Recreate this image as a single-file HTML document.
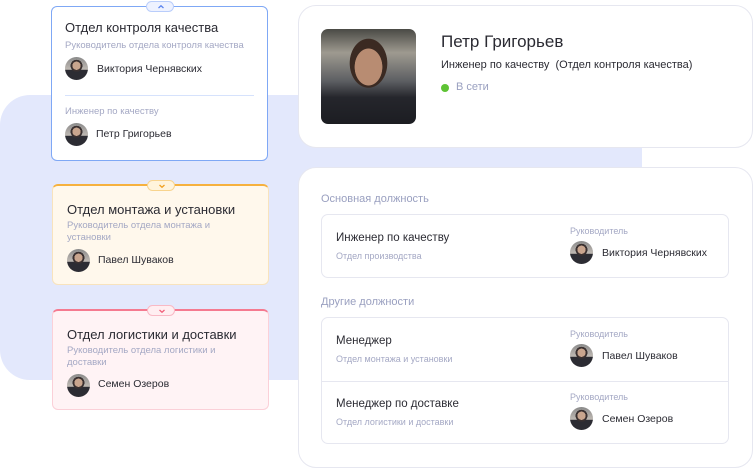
<!DOCTYPE html>
<html><head><meta charset="utf-8"><style>
*{box-sizing:border-box;margin:0;padding:0}
body{width:753px;height:468px;background:#fff;font-family:"Liberation Sans",sans-serif;position:relative;overflow:hidden;color:#2b2b33}
.abs{position:absolute}
.bg{left:0;top:95px;width:642px;height:285px;background:#e3e8fc;border-radius:30px 0 0 30px}
.card{position:absolute;border-radius:6px}
.t{font-size:13px;color:#2b2b33;position:absolute;white-space:nowrap}
.s{font-size:9.5px;color:#a4a8c4;position:absolute;line-height:12px}
.n{font-size:10.5px;color:#2b2b33;position:absolute;white-space:nowrap}
.av{position:absolute;width:23px;height:23px;border-radius:50%;background:radial-gradient(circle at 50% 38%,#c9a58e 0 22%,#3a3030 23% 32%,transparent 33%),linear-gradient(180deg,#8a8a8a 0%,#c0bab4 55%,#2c2c33 56%,#2c2c33 100%)}
.tab{position:absolute;width:28px;height:11px;border-radius:6px;left:94px;top:-6px}
.tab svg{position:absolute;left:10px;top:2px}
.big{position:absolute;background:#fff;border:1px solid #e6e7f0;border-radius:18px}
.box{position:absolute;left:22px;width:408px;border:1px solid #e6e7f0;border-radius:7px;background:#fff}
</style></head><body>
<div class="abs bg"></div>

<div class="card" style="left:51px;top:6px;width:217px;height:155px;background:#fff;border:1.3px solid #7fa8f5">
 <div class="tab" style="background:#eef2ff;border:1px solid #b9cdfb"><svg width="8" height="6" viewBox="0 0 8 6"><path d="M1.5 4L4 1.8 6.5 4" fill="none" stroke="#5b84ee" stroke-width="1.3"/></svg></div>
 <div class="t" style="left:13px;top:13px">Отдел контроля качества</div>
 <div class="s" style="left:13px;top:33px">Руководитель отдела контроля качества</div>
 <div class="av" style="left:13px;top:50px"></div>
 <div class="n" style="left:45px;top:56px">Виктория Чернявских</div>
 <div class="abs" style="left:13px;top:88px;width:189px;height:1px;background:#d6e2fc"></div>
 <div class="s" style="left:13px;top:99px">Инженер по качеству</div>
 <div class="av" style="left:13px;top:116px"></div>
 <div class="n" style="left:44px;top:121px">Петр Григорьев</div>
</div>

<div class="card" style="left:52px;top:184px;width:217px;height:101px;background:#fff8ec;border:1px solid #f8e3bd;border-top:2px solid #f6b13e">
 <div class="tab" style="background:#fff4dc;border:1px solid #f8d48e"><svg width="8" height="6" viewBox="0 0 8 6"><path d="M1.5 2L4 4.2 6.5 2" fill="none" stroke="#f0a020" stroke-width="1.3"/></svg></div>
 <div class="t" style="left:14px;top:16px">Отдел монтажа и установки</div>
 <div class="s" style="left:14px;top:34px;width:180px">Руководитель отдела монтажа и установки</div>
 <div class="av" style="left:14px;top:63px"></div>
 <div class="n" style="left:45px;top:68px">Павел Шуваков</div>
</div>

<div class="card" style="left:52px;top:309px;width:217px;height:101px;background:#fff3f5;border:1px solid #fbd0d8;border-top:2px solid #f57a90">
 <div class="tab" style="background:#ffeef1;border:1px solid #f9b9c5"><svg width="8" height="6" viewBox="0 0 8 6"><path d="M1.5 2L4 4.2 6.5 2" fill="none" stroke="#f0607a" stroke-width="1.3"/></svg></div>
 <div class="t" style="left:14px;top:16px">Отдел логистики и доставки</div>
 <div class="s" style="left:14px;top:34px;width:180px">Руководитель отдела логистики и доставки</div>
 <div class="av" style="left:14px;top:63px"></div>
 <div class="n" style="left:45px;top:67px">Семен Озеров</div>
</div>

<div class="big" style="left:298px;top:5px;width:455px;height:143px">
 <div class="abs" style="left:22px;top:23px;width:95px;height:95px;border-radius:7px;background:radial-gradient(ellipse 18% 24% at 50% 40%,#b88c72 0 80%,transparent 82%),radial-gradient(ellipse 23% 30% at 50% 36%,#3b2a22 0 85%,transparent 87%),linear-gradient(180deg,#4a4a45 0%,#9e9a90 25%,#5c5e62 55%,#25262c 72%,#1c1d22 100%)"></div>
 <div class="abs" style="left:142px;top:26px;font-size:17px;color:#2b2b33">Петр Григорьев</div>
 <div class="abs" style="left:142px;top:53px;font-size:11px;color:#2b2b33">Инженер по качеству&nbsp; (Отдел контроля качества)</div>
 <div class="abs" style="left:142px;top:78px;width:8px;height:8px;border-radius:50%;background:#5ec334"></div>
 <div class="abs" style="left:157px;top:75px;font-size:11px;color:#9aa0c0">В сети</div>
</div>

<div class="big" style="left:298px;top:167px;width:455px;height:301px">
 <div class="abs" style="left:22px;top:25px;font-size:11px;color:#9aa0c0">Основная должность</div>
 <div class="box" style="top:46px;height:64px">
  <div class="abs" style="left:14px;top:17px;font-size:11.5px">Инженер по качеству</div>
  <div class="abs" style="left:14px;top:36px;font-size:9px;color:#a4a8c4">Отдел производства</div>
  <div class="abs" style="left:248px;top:11px;font-size:9px;color:#a4a8c4">Руководитель</div>
  <div class="av" style="left:248px;top:26px"></div>
  <div class="n" style="left:280px;top:32px">Виктория Чернявских</div>
 </div>
 <div class="abs" style="left:22px;top:128px;font-size:11px;color:#9aa0c0">Другие должности</div>
 <div class="box" style="top:149px;height:127px">
  <div class="abs" style="left:14px;top:17px;font-size:11.5px">Менеджер</div>
  <div class="abs" style="left:14px;top:36px;font-size:9px;color:#a4a8c4">Отдел монтажа и установки</div>
  <div class="abs" style="left:248px;top:11px;font-size:9px;color:#a4a8c4">Руководитель</div>
  <div class="av" style="left:248px;top:26px"></div>
  <div class="n" style="left:280px;top:32px">Павел Шуваков</div>
  <div class="abs" style="left:0;top:63px;width:100%;height:1px;background:#e6e7f0"></div>
  <div class="abs" style="left:14px;top:80px;font-size:11.5px">Менеджер по доставке</div>
  <div class="abs" style="left:14px;top:99px;font-size:9px;color:#a4a8c4">Отдел логистики и доставки</div>
  <div class="abs" style="left:248px;top:74px;font-size:9px;color:#a4a8c4">Руководитель</div>
  <div class="av" style="left:248px;top:89px"></div>
  <div class="n" style="left:280px;top:95px">Семен Озеров</div>
 </div>
</div>
</body></html>
